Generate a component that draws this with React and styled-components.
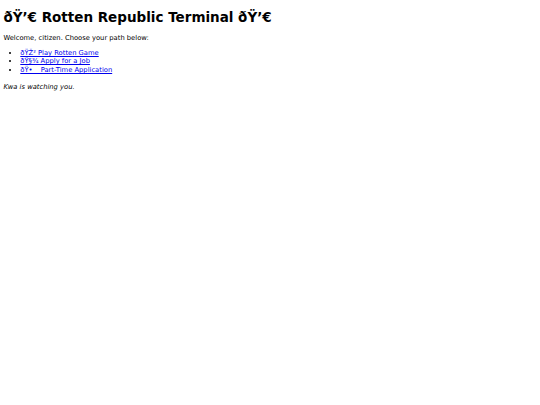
import styled, { createGlobalStyle } from "styled-components";

// the reference is a 1280px-wide page shown at 540px, so every default size is scaled by 0.42
const Global = createGlobalStyle`
  body {
    margin: 3.4px;
    font-family: "DejaVu Sans", Verdana, sans-serif;
    font-size: 6.75px;
    color: #000;
    background: #fff;
  }
`;

const Title = styled.h1`
  font-size: 13.5px;
  font-weight: bold;
  margin: 6px 0 9px;
`;

const Text = styled.p`
  margin: 6.75px 0;
`;

const Menu = styled.ul`
  margin: 6.75px 0;
  padding-left: 16.9px;
  list-style: disc;
`;

const Item = styled.li``;

const Link = styled.a`
  color: #0000ee;
  text-decoration: underline;
`;

const Note = styled.p`
  margin: 8.75px 0 6.75px;
  font-style: italic;
`;

const links = [
  { label: "ðŸŽ² Play Rotten Game", href: "#game" },
  { label: "ðŸ§¾ Apply for a Job", href: "#job" },
  { label: "ðŸ•\u0090 Part-Time Application", href: "#parttime" },
];

export default function App() {
  return (
    <>
      <Global />
      <Title>ðŸ’€ Rotten Republic Terminal ðŸ’€</Title>
      <Text>Welcome, citizen. Choose your path below:</Text>
      <Menu>
        {links.map((l) => (
          <Item key={l.href}>
            <Link href={l.href}>{l.label}</Link>
          </Item>
        ))}
      </Menu>
      <Note>Kwa is watching you.</Note>
    </>
  );
}
